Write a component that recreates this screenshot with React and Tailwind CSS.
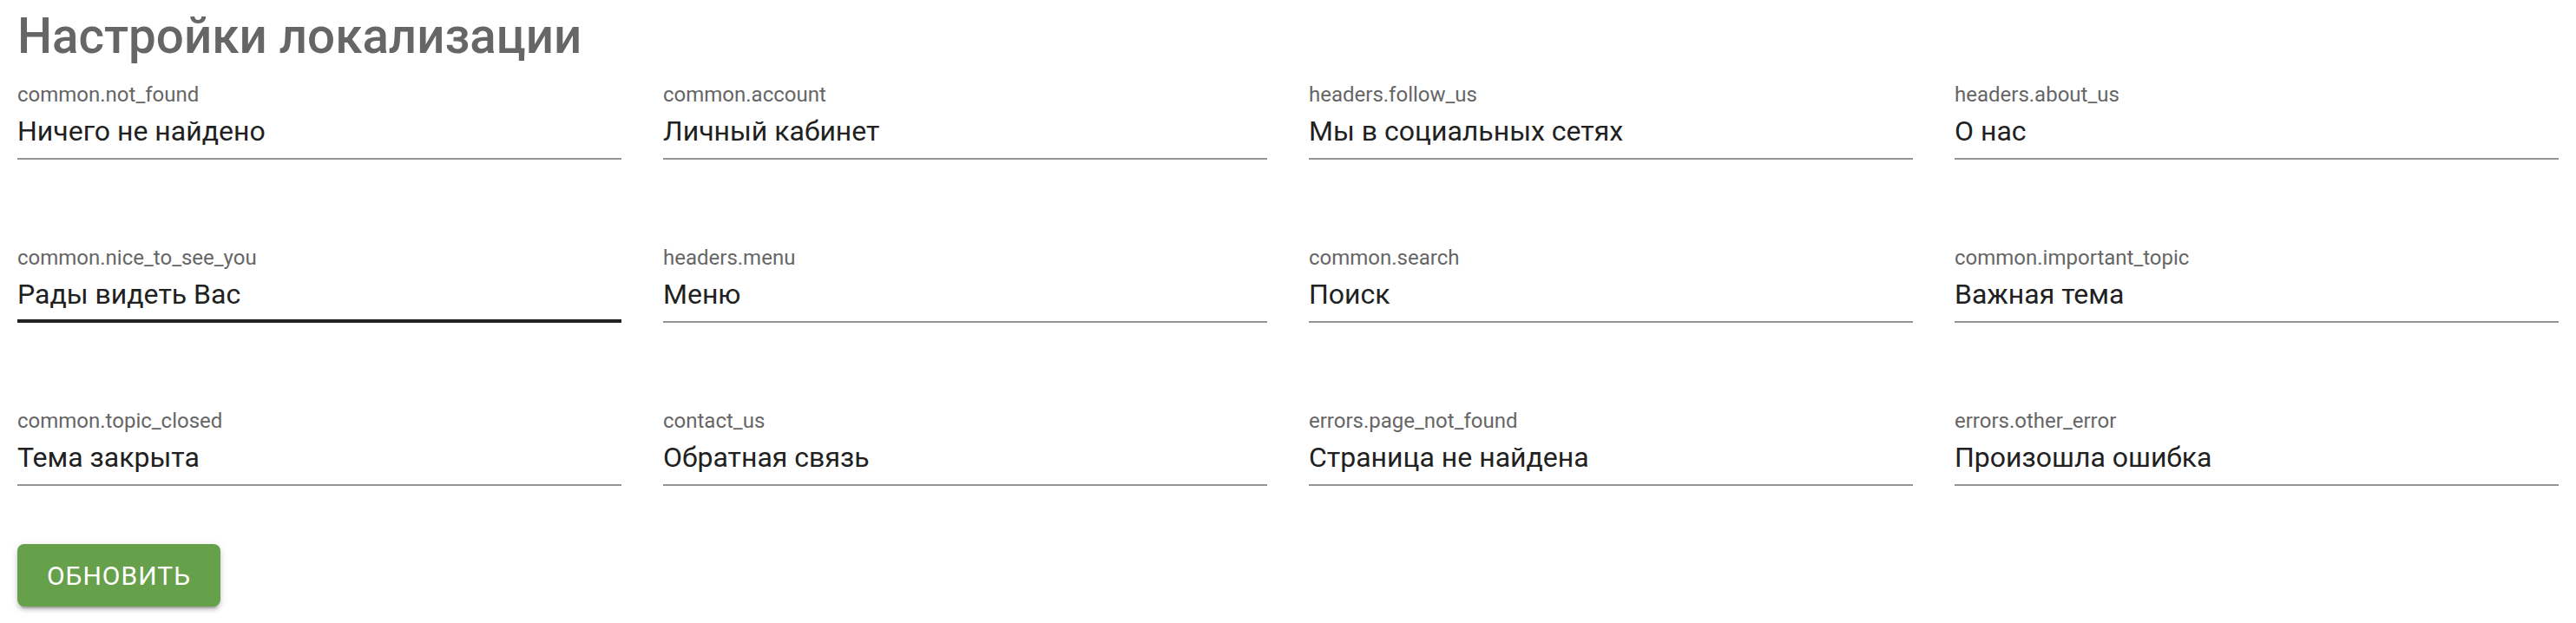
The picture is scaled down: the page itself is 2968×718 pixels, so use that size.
import React, { useState } from "react";

const fields = [
  { key: "common.not_found", value: "Ничего не найдено" },
  { key: "common.account", value: "Личный кабинет" },
  { key: "headers.follow_us", value: "Мы в социальных сетях" },
  { key: "headers.about_us", value: "О нас" },
  { key: "common.nice_to_see_you", value: "Рады видеть Вас" },
  { key: "headers.menu", value: "Меню" },
  { key: "common.search", value: "Поиск" },
  { key: "common.important_topic", value: "Важная тема" },
  { key: "common.topic_closed", value: "Тема закрыта" },
  { key: "contact_us", value: "Обратная связь" },
  { key: "errors.page_not_found", value: "Страница не найдена" },
  { key: "errors.other_error", value: "Произошла ошибка" },
];

const LocaleField = ({ label, value, hovered, onChange }) => (
  <label className="flex flex-col">
    <span className="text-[24px] leading-[24px] text-[#666666] mb-[7px]">{label}</span>
    <input
      type="text"
      value={value}
      onChange={(e) => onChange(e.target.value)}
      className={`h-[46px] text-[32px] leading-[46px] text-[#212121] bg-transparent outline-none border-b-2 box-content ${
        hovered ? "pb-[6px] border-b-4 border-[#212121]" : "pb-[8px] border-[#949494]"
      }`}
    />
  </label>
);

export default function App() {
  const [values, setValues] = useState(fields.map((f) => f.value));

  // update one translation in place
  const handleChange = (index, text) => {
    setValues((prev) => prev.map((v, i) => (i === index ? text : v)));
  };

  return (
    <div className="min-h-screen bg-white px-[20px] font-['Roboto','Liberation_Sans',sans-serif]">
      <h1 className="pt-[13px] mb-[26px] text-[56.5px] leading-[58px] font-medium text-[#666666]">
        Настройки локализации
      </h1>

      <div className="grid grid-cols-4 gap-x-[48px] gap-y-[101px]">
        {fields.map((field, i) => (
          <LocaleField
            key={field.key}
            label={field.key}
            value={values[i]}
            hovered={field.key === "common.nice_to_see_you"}
            onChange={(text) => handleChange(i, text)}
          />
        ))}
      </div>

      <button
        onClick={() => console.log("update", values)}
        className="mt-[67px] flex items-center justify-center w-[234px] h-[72px] rounded-[8px] bg-[#67a04a] text-white text-[30px] tracking-[1px] uppercase shadow-[0_6px_2px_-4px_rgba(0,0,0,0.2),0_4px_4px_0_rgba(0,0,0,0.14),0_2px_10px_0_rgba(0,0,0,0.12)]"
      >
        Обновить
      </button>
    </div>
  );
}
